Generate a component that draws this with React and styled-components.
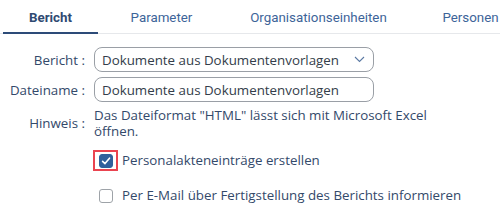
import React from "react";
import styled, { createGlobalStyle } from "styled-components";

const Global = createGlobalStyle`
  body {
    margin: 0;
    background: #fff;
    font-family: "Open Sans", "Noto Sans", sans-serif;
  }
`;

const Page = styled.div`
  width: 500px;
  height: 221px;
  overflow: hidden;
`;

const Tabs = styled.div`
  display: flex;
  height: 34px;
  border-bottom: 1px solid #e6e8eb;
  font-family: Roboto, "Liberation Sans", sans-serif;
  font-size: 13.33px;
  white-space: nowrap;
  padding-left: 3px;
  box-sizing: border-box;
`;

const Tab = styled.div`
  width: ${p => p.w}px;
  flex: none;
  display: flex;
  justify-content: center;
  align-items: center;
  color: ${p => (p.active ? "#2f4a72" : "#3d6499")};
  font-weight: ${p => (p.active ? 700 : 400)};
  border-bottom: 2px solid ${p => (p.active ? "#2d4b78" : "transparent")};
  margin-bottom: -1px;
  padding-top: 2px;
`;

const Form = styled.div`
  display: grid;
  grid-template-columns: 85px 280px;
  column-gap: 9px;
  row-gap: 5px;
  padding-top: 13px;
  font-size: 13.33px;
  color: #33496a;
`;

const Label = styled.div`
  text-align: right;
  align-self: center;
  white-space: nowrap;
`;

const Field = styled.div`
  height: 25px;
  box-sizing: border-box;
  border: 1px solid #9a9fa6;
  border-radius: 8px;
  display: flex;
  align-items: center;
  justify-content: space-between;
  padding: 0 8px 0 7px;
  color: #333d4a;
`;

const Note = styled.div`
  line-height: 16px;
  width: 340px;
`;

const Checks = styled.div`
  display: flex;
  flex-direction: column;
  gap: 14px;
  padding: 11px 0 0 93px;
  font-size: 13.33px;
  color: #33496a;
`;

const CheckRow = styled.label`
  display: flex;
  align-items: center;
  gap: 4px;
  height: 21px;
  line-height: 21px;
`;

const Frame = styled.span`
  width: 25px;
  height: 21px;
  box-sizing: border-box;
  display: flex;
  align-items: center;
  justify-content: center;
  border: 2px solid ${p => (p.focus ? "#ea4450" : "transparent")};
`;

const Box = styled.span`
  width: 14px;
  height: 14px;
  box-sizing: border-box;
  border-radius: 3px;
  display: flex;
  align-items: center;
  justify-content: center;
  background: ${p => (p.checked ? "#30609c" : "#fff")};
  border: 1px solid ${p => (p.checked ? "#30609c" : "#9ea3a8")};
`;

function Checkbox({ checked, focus, children }) {
  return (
    <CheckRow>
      <Frame focus={focus}>
        <Box checked={checked}>
          {checked && (
            <svg width="10" height="10" viewBox="0 0 10 10">
              <path d="M1.6 5.3 L4 7.6 L8.5 2.2" fill="none" stroke="#fff" strokeWidth="1.6" strokeLinecap="round" strokeLinejoin="round" />
            </svg>
          )}
        </Box>
      </Frame>
      <span>{children}</span>
    </CheckRow>
  );
}

export default function App() {
  return (
    <Page>
      <Global />
      <Tabs>
        <Tab active w={95}>Bericht</Tab>
        <Tab w={127}>Parameter</Tab>
        <Tab w={187}>Organisationseinheiten</Tab>
        <Tab w={117}>Personen</Tab>
      </Tabs>
      <Form>
        <Label>Bericht :</Label>
        <Field>
          <span>Dokumente aus Dokumentenvorlagen</span>
          <svg width="11" height="7" viewBox="0 0 11 7">
            <path d="M1 1 L5.5 5.5 L10 1" fill="none" stroke="#5b79a3" strokeWidth="1.1" />
          </svg>
        </Field>
        <Label>Dateiname :</Label>
        <Field>
          <span>Dokumente aus Dokumentenvorlagen</span>
        </Field>
        <Label>Hinweis :</Label>
        <Note>Das Dateiformat "HTML" lässt sich mit Microsoft Excel öffnen.</Note>
      </Form>
      <Checks>
        <Checkbox checked focus>Personalakteneinträge erstellen</Checkbox>
        <Checkbox>Per E-Mail über Fertigstellung des Berichts informieren</Checkbox>
      </Checks>
    </Page>
  );
}
